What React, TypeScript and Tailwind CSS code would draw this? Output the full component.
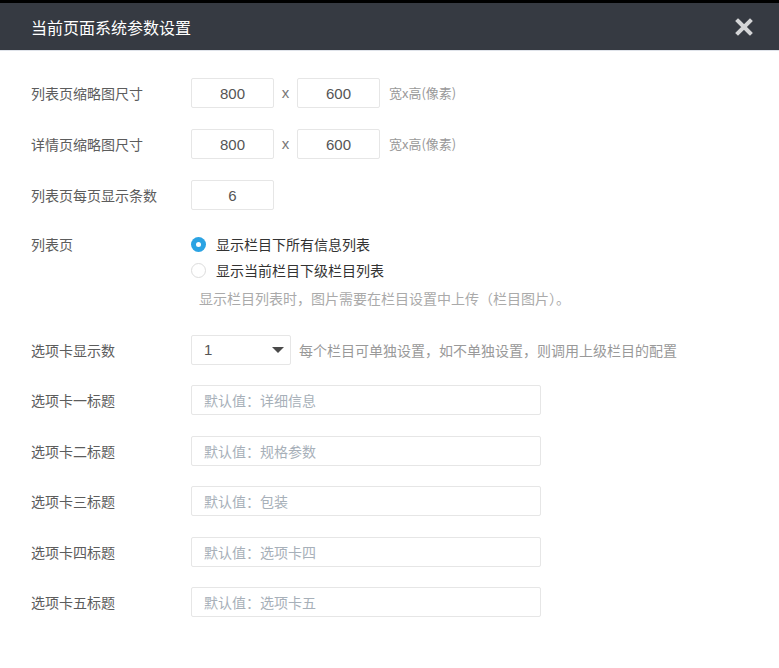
import { useState } from "react";

const font = { fontFamily: '"Noto Sans CJK SC", "Microsoft YaHei", sans-serif' };
const latin = { fontFamily: '"Liberation Sans", Arial, sans-serif' };

function Label({ children }: { children: string }) {
  return <div className="w-[160px] shrink-0 text-[14px] text-[#5c5c5c]">{children}</div>;
}

function NumBox({ value }: { value: string }) {
  return (
    <input
      defaultValue={value}
      className="h-[30px] w-[83px] rounded-[2px] border border-[#e6e6e6] bg-white text-center text-[15px] text-[#555] outline-none"
      style={latin}
    />
  );
}

function TextBox({ placeholder }: { placeholder: string }) {
  return (
    <input
      placeholder={placeholder}
      className="h-[30px] w-[350px] rounded-[2px] border border-[#e6e6e6] bg-white px-3 text-[14px] text-[#333] outline-none placeholder:text-[#a7b0b9]"
    />
  );
}

function Radio({ checked, label, onClick }: { checked: boolean; label: string; onClick: () => void }) {
  return (
    <button onClick={onClick} className="flex h-[26px] items-center gap-[10px] text-[14px] text-[#333]">
      {checked ? (
        <span className="flex h-[15px] w-[15px] items-center justify-center rounded-full bg-[#2ba3e3]">
          <span className="h-[5px] w-[5px] rounded-full bg-white" />
        </span>
      ) : (
        <span className="h-[15px] w-[15px] rounded-full border border-[#dcdcdc] bg-white" />
      )}
      {label}
    </button>
  );
}

function Times() {
  return (
    <span className="w-[23px] text-center text-[15px] text-[#777]" style={latin}>
      x
    </span>
  );
}

export default function App() {
  const [mode, setMode] = useState(0);

  return (
    <div className="h-[668px] w-[779px] bg-white" style={font}>
      <div className="h-[3px] bg-black" />
      {/* Header */}
      <div className="flex h-[48px] items-center justify-between border-b border-[#dfe3ea] bg-[#363a42] pl-[31px] pr-[26px]">
        <h1 className="text-[16px] text-white">当前页面系统参数设置</h1>
        <svg width="18" height="18" viewBox="0 0 18 18">
          <path d="M3 3 L15 15 M15 3 L3 15" stroke="#d4d5d7" strokeWidth="4" strokeLinecap="square" />
        </svg>
      </div>

      {/* Body */}
      <div className="flex flex-col px-[31px] pt-[27px]">
        <div className="flex items-center">
          <Label>列表页缩略图尺寸</Label>
          <NumBox value="800" />
          <Times />
          <NumBox value="600" />
          <span className="ml-[9px] text-[13px] text-[#999]">宽x高(像素)</span>
        </div>

        <div className="mt-[21px] flex items-center">
          <Label>详情页缩略图尺寸</Label>
          <NumBox value="800" />
          <Times />
          <NumBox value="600" />
          <span className="ml-[9px] text-[13px] text-[#999]">宽x高(像素)</span>
        </div>

        <div className="mt-[21px] flex items-center">
          <Label>列表页每页显示条数</Label>
          <NumBox value="6" />
        </div>

        <div className="mt-[21px] flex">
          <div className="flex h-[26px] items-center">
            <Label>列表页</Label>
          </div>
          <div className="flex flex-col items-start">
            <Radio checked={mode === 0} label="显示栏目下所有信息列表" onClick={() => setMode(0)} />
            <Radio checked={mode === 1} label="显示当前栏目下级栏目列表" onClick={() => setMode(1)} />
            <div className="mt-[2px] pl-[8px] text-[14px] leading-[26px] text-[#aaa]">
              显示栏目列表时，图片需要在栏目设置中上传（栏目图片）。
            </div>
          </div>
        </div>

        <div className="mt-[24px] flex items-center">
          <Label>选项卡显示数</Label>
          <div className="flex h-[30px] w-[100px] items-center justify-between rounded-[2px] border border-[#e6e6e6] pl-[12px] pr-[6px] text-[15px] text-[#555]">
            <span style={latin}>1</span>
            <svg width="12" height="8" viewBox="0 0 12 8">
              <path d="M0 1 L12 1 L6 7 Z" fill="#4a4a4a" />
            </svg>
          </div>
          <span className="ml-[8px] text-[14px] text-[#999]">每个栏目可单独设置，如不单独设置，则调用上级栏目的配置</span>
        </div>

        <div className="mt-[20px] flex items-center">
          <Label>选项卡一标题</Label>
          <TextBox placeholder="默认值：详细信息" />
        </div>
        <div className="mt-[21px] flex items-center">
          <Label>选项卡二标题</Label>
          <TextBox placeholder="默认值：规格参数" />
        </div>
        <div className="mt-[20px] flex items-center">
          <Label>选项卡三标题</Label>
          <TextBox placeholder="默认值：包装" />
        </div>
        <div className="mt-[21px] flex items-center">
          <Label>选项卡四标题</Label>
          <TextBox placeholder="默认值：选项卡四" />
        </div>
        <div className="mt-[20px] flex items-center">
          <Label>选项卡五标题</Label>
          <TextBox placeholder="默认值：选项卡五" />
        </div>
      </div>
    </div>
  );
}
